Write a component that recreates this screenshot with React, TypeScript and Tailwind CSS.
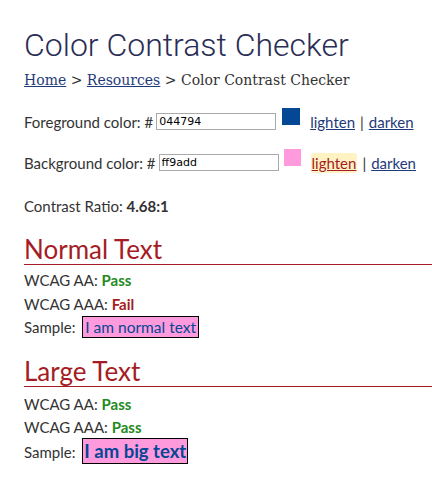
import React from "react";

const body = "font-['Lato','Noto_Sans',sans-serif]";

export default function App() {
  return (
    <div className={`min-h-[484px] bg-white px-6 pt-[28px] text-[#333] ${body}`}>
      <h1 className="whitespace-nowrap font-['Roboto',sans-serif] text-[32px] font-light leading-[34px] text-[#2a2d55]">
        Color Contrast Checker
      </h1>
      <p className="mt-[8px] whitespace-nowrap font-['DejaVu_Serif',serif] text-[14px] leading-[20px] text-[#333]">
        <a href="#" className="text-[#1f3a7a] underline">Home</a> &gt;{" "}
        <a href="#" className="text-[#1f3a7a] underline">Resources</a> &gt; Color Contrast Checker
      </p>

      <div className="mt-[18px] flex items-center whitespace-nowrap text-[15px] leading-[20px]">
        <span className="shrink-0 pr-[2px]">Foreground color: #</span>
        <input
          readOnly
          value="044794"
          className="ml-px h-[17px] w-[120px] shrink-0 border border-[#aaa] px-[2px] font-['DejaVu_Sans',sans-serif] text-[11px] text-black"
        />
        <span className="ml-[6px] mb-[10px] h-[17px] w-[18px] shrink-0 border border-dashed border-[#044794] bg-[#044794]" />
        <a href="#" className="ml-[10px] text-[#1f3a7a] underline">lighten</a>
        <span className="mx-[5px]">|</span>
        <a href="#" className="text-[#1f3a7a] underline">darken</a>
      </div>

      <div className="mt-[14px] flex items-center whitespace-nowrap text-[15px] leading-[20px]">
        <span className="shrink-0 pr-[2px]">Background color: #</span>
        <input
          readOnly
          value="ff9add"
          className="ml-px h-[17px] w-[120px] shrink-0 border border-[#aaa] px-[2px] font-['DejaVu_Sans',sans-serif] text-[11px] text-black"
        />
        <span className="ml-[5px] mb-[10px] h-[17px] w-[17px] shrink-0 bg-[#ff9add]" />
        <a href="#" className="ml-[10px] rounded-[2px] bg-[#fff3c4] px-px text-[#a51c24] underline">lighten</a>
        <span className="mx-[5px]">|</span>
        <a href="#" className="text-[#1f3a7a] underline">darken</a>
      </div>

      <p className="mt-[20px] text-[15px] leading-[20px]">
        Contrast Ratio: <b>4.68:1</b>
      </p>

      <h2 className="mt-[20px] mr-[-24px] border-b border-[#a51c24] pb-[2px] text-[26px] leading-[26px] text-[#a51c24]">
        Normal Text
      </h2>
      <div className="mt-[4px] text-[15px] leading-[23.5px]">
        <p>WCAG AA: <b className="text-[#1e8a1e]">Pass</b></p>
        <p>WCAG AAA: <b className="text-[#a51c24]">Fail</b></p>
        <p>
          Sample:{" "}
          <span className="ml-[3px] border border-black bg-[#ff9add] px-[2px] py-px text-[15.5px] text-[#044794]">I am normal text</span>
        </p>
      </div>

      <h2 className="mt-[18px] mr-[-24px] border-b border-[#a51c24] pb-[2px] text-[26px] leading-[26px] text-[#a51c24]">
        Large Text
      </h2>
      <div className="mt-[6px] text-[15px] leading-[23.5px]">
        <p>WCAG AA: <b className="text-[#1e8a1e]">Pass</b></p>
        <p>WCAG AAA: <b className="text-[#1e8a1e]">Pass</b></p>
        <p>
          Sample:{" "}
          <span className="ml-[3px] border border-black bg-[#ff9add] px-px py-px text-[18.5px] font-bold text-[#044794]">I am big text</span>
        </p>
      </div>
    </div>
  );
}
